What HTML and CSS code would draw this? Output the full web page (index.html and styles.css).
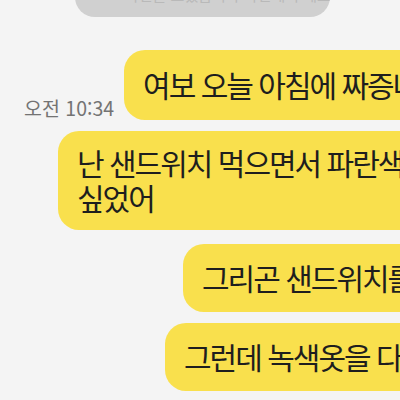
FILE: index.html
```html
<!DOCTYPE html>
<html lang="ko">
<head>
<meta charset="utf-8">
<link rel="stylesheet" href="styles.css">
</head>
<body>
<div class="chat">
  <div class="row row-notice">
    <div class="notice">사진을 보냈습니다 확인해 주세요</div>
  </div>
  <div class="row row-first">
    <span class="time">오전 10:34</span>
    <div class="bubble">여보 오늘 아침에 짜증나는 일이 있었어</div>
  </div>
  <div class="row row-2">
    <div class="bubble">난 샌드위치 먹으면서 파란색 옷을 입고<br>싶었어</div>
  </div>
  <div class="row row-3">
    <div class="bubble">그리곤 샌드위치를 먹었는데</div>
  </div>
  <div class="row row-4">
    <div class="bubble">그런데 녹색옷을 다 입고 나서야</div>
  </div>
</div>
</body>
</html>
```
FILE: styles.css
```css
html, body {
  margin: 0;
  padding: 0;
  background: #f4f4f4;
  overflow: hidden;
  width: 400px;
  height: 400px;
}
.chat {
  display: flex;
  flex-direction: column;
  font-family: "Noto Sans CJK KR", "Noto Sans", sans-serif;
  color: #1e1e1e;
}
.row {
  display: flex;
  align-items: flex-end;
  white-space: nowrap;
}
.row-notice {
  padding-left: 75px;
  margin-top: -23px;
}
.notice {
  width: 255px;
  height: 40px;
  box-sizing: border-box;
  background: #d0d0d0;
  border-radius: 20px;
  color: #b9b9b9;
  font-size: 15px;
  line-height: 15px;
  padding: 10px 0 0 50px;
  overflow: hidden;
}
.bubble {
  background: #f9e04d;
  border-radius: 21px;
  font-size: 30px;
  letter-spacing: -2px;
  line-height: 35px;
  padding: 17px 20px 18px 19px;
  flex-shrink: 0;
}
.row-first {
  margin-top: 33px;
  padding-left: 24px;
  gap: 10px;
}
.time {
  font-size: 19.5px;
  line-height: 22px;
  color: #737373;
  padding-bottom: 1px;
}
.row-2 {
  margin-top: 11px;
  padding-left: 58px;
}
.row-2 .bubble {
  padding-top: 14px;
  padding-bottom: 15px;
}
.row-3 {
  margin-top: 14px;
  padding-left: 183px;
}
.row-3 .bubble {
  padding-top: 16px;
  padding-bottom: 17px;
}
.row-4 {
  margin-top: 11px;
  padding-left: 165px;
}
.row-4 .bubble {
  padding-top: 16px;
  padding-bottom: 17px;
}
```
